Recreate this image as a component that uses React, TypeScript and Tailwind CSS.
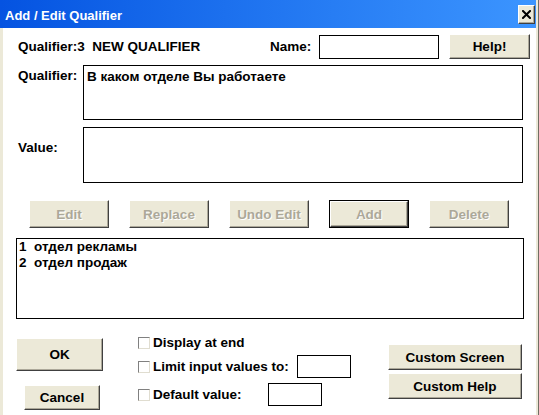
import React from 'react';

const face = 'bg-[#ece9d8]';
const bevel =
  'border border-t-white border-l-white border-r-[#404040] border-b-[#404040] shadow-[inset_-1px_-1px_0_#aca899]';

type BtnProps = {
  label: string;
  className?: string;
  disabled?: boolean;
  focused?: boolean;
};

const WinButton = ({ label, className, disabled, focused }: BtnProps) => {
  const inner = (
    <div
      className={`flex h-full w-full items-center justify-center ${face} ${bevel} ${
        disabled ? 'text-[#aca899] [text-shadow:1px_1px_0_#fff]' : 'text-black'
      }`}
    >
      {label}
    </div>
  );
  if (focused) {
    return (
      <div className={`border border-black ${className ?? ''}`}>{inner}</div>
    );
  }
  return <div className={className}>{inner}</div>;
};

const CheckBox = ({ label, width }: { label: string; width?: string }) => (
  <div className={`flex items-center ${width ?? ''}`}>
    <span className="mr-[3px] block h-[12px] w-[12px] border border-t-[#808080] border-l-[#808080] border-r-[#e0ddd0] border-b-[#e0ddd0] bg-white" />
    <span>{label}</span>
  </div>
);

export default function App() {
  return (
    <div
      className="h-[415px] w-[539px] overflow-hidden border-r border-[#716f64] bg-white text-[13.5px] font-bold leading-[15px] text-black"
      style={{ fontFamily: '"Liberation Sans", Arial, sans-serif' }}
    >
      <div className="flex h-full flex-col border-r-[2px] border-[#ece9d8]">
        {/* title bar */}
        <div className="flex h-[28px] shrink-0 items-center bg-gradient-to-r from-[#0553e1] to-[#3c95ff] pl-[5px] pr-[1px] pt-[2px] text-[13px] text-white">
          <span className="flex-1">Add / Edit Qualifier</span>
          <div
            className={`mb-[2px] flex h-[19px] w-[17px] items-center justify-center ${face} ${bevel}`}
          >
            <svg width="9" height="9" viewBox="0 0 9 9">
              <path
                d="M1 1 L8 8 M8 1 L1 8"
                stroke="#000"
                strokeWidth="2"
                strokeLinecap="square"
              />
            </svg>
          </div>
        </div>

        <div className="flex flex-1 flex-col border-l-[3px] border-[#ece9d8]">
          {/* header row */}
          <div className="ml-[15px] mt-[6px] flex h-[25px] items-center">
            <span className="w-[252px]">Qualifier:3&nbsp;&nbsp;NEW QUALIFIER</span>
            <span className="w-[49px]">Name:</span>
            <div className="h-[24px] w-[120px] border border-black bg-white" />
            <WinButton label="Help!" className="ml-[10px] h-[25px] w-[81px]" />
          </div>

          {/* qualifier text */}
          <div className="ml-[15px] mt-[6px] flex">
            <span className="w-[65px] pt-[3px]">Qualifier:</span>
            <div className="h-[55px] w-[440px] border border-black bg-white pl-[3px] pt-[3px]">
              В каком отделе Вы работаете
            </div>
          </div>

          {/* value */}
          <div className="ml-[15px] mt-[7px] flex">
            <span className="w-[65px] pt-[13px]">Value:</span>
            <div className="h-[56px] w-[440px] border border-black bg-white" />
          </div>

          {/* action buttons */}
          <div className="ml-[26px] mt-[17px] flex h-[28px] gap-[20px]">
            <WinButton label="Edit" disabled className="w-[80px]" />
            <WinButton label="Replace" disabled className="w-[80px]" />
            <WinButton label="Undo Edit" disabled className="w-[80px]" />
            <WinButton label="Add" disabled focused className="w-[80px]" />
            <WinButton label="Delete" disabled className="w-[80px]" />
          </div>

          {/* values list */}
          <div className="ml-[13px] mt-[10px] h-[81px] w-[508px] border border-black bg-white pl-[2px] leading-[16px]">
            <div>1&nbsp;&nbsp;отдел рекламы</div>
            <div>2&nbsp;&nbsp;отдел продаж</div>
          </div>

          {/* bottom controls */}
          <div className="mt-[18px] flex">
            <div className="ml-[13px] flex w-[122px] flex-col">
              <WinButton label="OK" className="mt-[1px] h-[33px] w-[87px]" />
              <WinButton label="Cancel" className="ml-[8px] mt-[14px] h-[25px] w-[76px]" />
            </div>

            <div className="flex w-[250px] flex-col">
              <div className="-mt-[1px] flex h-[13px] items-center">
                <CheckBox label="Display at end" />
              </div>
              <div className="mt-[6px] flex h-[23px] items-center">
                <CheckBox label="Limit input values to:" width="w-[159px]" />
                <div className="h-[23px] w-[54px] border border-black bg-white" />
              </div>
              <div className="mt-[5px] flex h-[23px] items-center">
                <CheckBox label="Default value:" width="w-[130px]" />
                <div className="h-[23px] w-[54px] border border-black bg-white" />
              </div>
            </div>

            <div className="mt-[7px] flex flex-col gap-[3px]">
              <WinButton label="Custom Screen" className="h-[26px] w-[134px]" />
              <WinButton label="Custom Help" className="h-[26px] w-[134px]" />
            </div>
          </div>
        </div>
      </div>
    </div>
  );
}
